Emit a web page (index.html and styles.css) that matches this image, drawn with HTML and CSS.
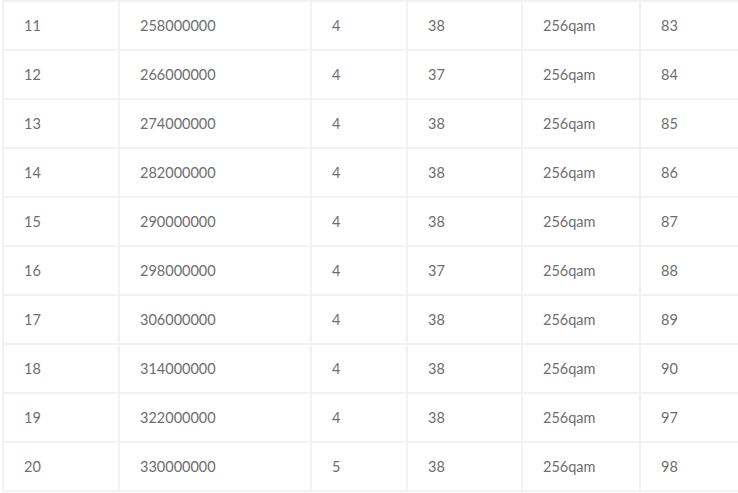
FILE: index.html
```html
<!DOCTYPE html>
<html lang="en">
<head>
<meta charset="utf-8">
<title>Channels</title>
<link rel="stylesheet" href="styles.css">
</head>
<body>
<div class="wrap">
<table class="grid">
<colgroup>
<col class="c1"><col class="c2"><col class="c3"><col class="c4"><col class="c5"><col class="c6">
</colgroup>
<tbody>
<tr><td>11</td><td>258000000</td><td>4</td><td>38</td><td>256qam</td><td>83</td></tr>
<tr><td>12</td><td>266000000</td><td>4</td><td>37</td><td>256qam</td><td>84</td></tr>
<tr><td>13</td><td>274000000</td><td>4</td><td>38</td><td>256qam</td><td>85</td></tr>
<tr><td>14</td><td>282000000</td><td>4</td><td>38</td><td>256qam</td><td>86</td></tr>
<tr><td>15</td><td>290000000</td><td>4</td><td>38</td><td>256qam</td><td>87</td></tr>
<tr><td>16</td><td>298000000</td><td>4</td><td>37</td><td>256qam</td><td>88</td></tr>
<tr><td>17</td><td>306000000</td><td>4</td><td>38</td><td>256qam</td><td>89</td></tr>
<tr><td>18</td><td>314000000</td><td>4</td><td>38</td><td>256qam</td><td>90</td></tr>
<tr><td>19</td><td>322000000</td><td>4</td><td>38</td><td>256qam</td><td>97</td></tr>
<tr><td>20</td><td>330000000</td><td>5</td><td>38</td><td>256qam</td><td>98</td></tr>
</tbody>
</table>
</div>
</body>
</html>
```
FILE: styles.css
```css
html, body {
  margin: 0;
  padding: 0;
  background: #fff;
}
.wrap {
  padding-left: 2px;
  width: 738px;
  box-sizing: border-box;
  overflow: hidden;
}
.grid {
  border-collapse: collapse;
  table-layout: fixed;
  width: 757px;
  font-family: Lato, "Open Sans", sans-serif;
  font-size: 14.5px;
  color: #6e6e6e;
}
.c1 { width: 116px; }
.c2 { width: 192px; }
.c3 { width: 96px; }
.c4 { width: 115px; }
.c5 { width: 118px; }
.c6 { width: 120px; }
.grid td {
  border: 2px solid #f2f2f2;
  height: 49px;
  padding: 0 0 0 20px;
  box-sizing: border-box;
  vertical-align: middle;
  text-align: left;
  white-space: nowrap;
}
```
